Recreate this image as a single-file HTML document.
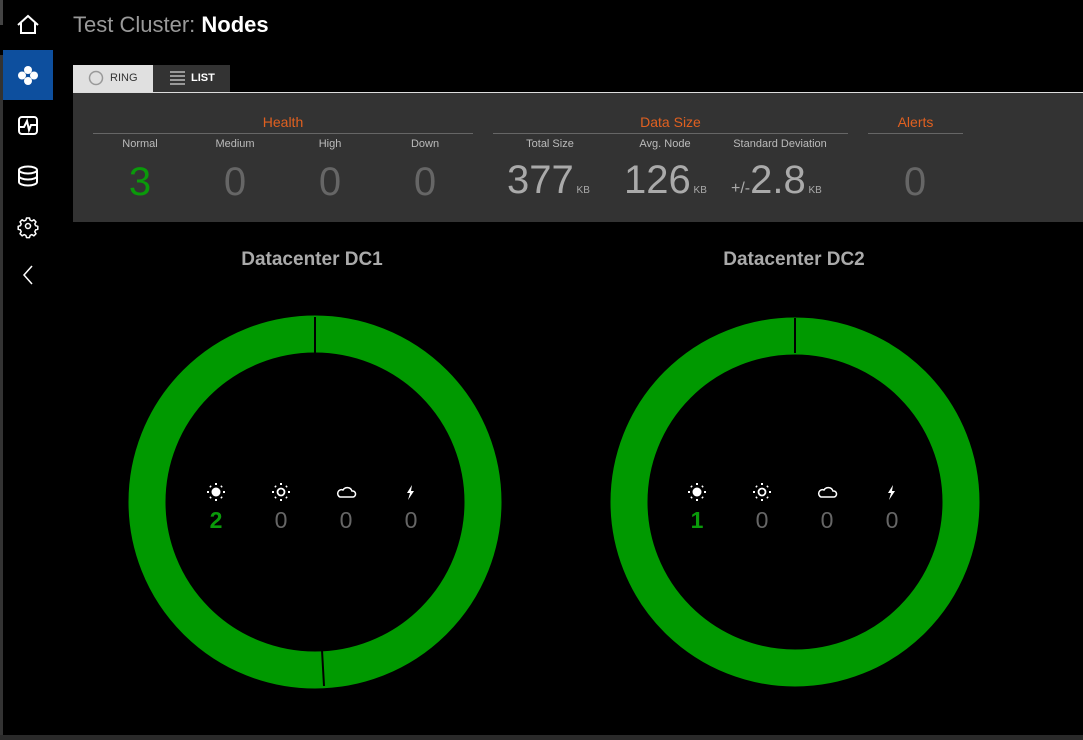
<!DOCTYPE html>
<html><head><style>
body{margin:0;width:1083px;height:740px;background:#000;font-family:"Liberation Sans",Arial,sans-serif;position:relative;overflow:hidden}
.a{position:absolute}
.lab{font-size:11px;color:#bbb;text-align:center;width:100px}
.big{font-size:40px;color:#666;text-align:center;width:100px}
.sec{font-size:14px;color:#e06020;text-align:center}
.kb{font-size:10px;color:#aaa}
.cnt{font-size:23px;color:#666;width:40px;text-align:center}
</style></head><body>
<div class="a" style="left:0;top:0;width:3px;height:25px;background:#444"></div>
<div class="a" style="left:0;top:55px;width:3px;height:680px;background:#333"></div>
<div class="a" style="left:3px;top:50px;width:50px;height:50px;background:#0d4f9e"></div>
<svg class="a" style="left:0;top:0" width="53" height="300" fill="none" stroke="#fff" stroke-width="2">
<path d="M18 25 L28 16 L38 25 M21 23 V33 H35 V23"/>
<g fill="#fff" stroke="none"><circle cx="28" cy="70" r="4"/><circle cx="28" cy="81" r="4"/><circle cx="22" cy="75.5" r="4"/><circle cx="34" cy="75.5" r="4"/></g>
<rect x="19" y="117" width="18" height="17" rx="3"/><path d="M19 127 H24 L27 121 L29 130 L31 125 H37"/>
<ellipse cx="28" cy="170" rx="9" ry="3.5"/><path d="M19 170 V182 M37 170 V182 M19 176 A9 3.5 0 0 0 37 176 M19 182 A9 3.5 0 0 0 37 182"/>
<circle cx="28" cy="226" r="2.5" stroke-width="1.5"/>
<path stroke-width="1.5" stroke-linejoin="round" d="M26.5 218 h3 l0.6 2.2 l1.8 0.8 l2-1.2 l2.1 2.1 l-1.2 2 l0.8 1.8 l2.2 0.6 v3 l-2.2 0.6 l-0.8 1.8 l1.2 2 l-2.1 2.1 l-2-1.2 l-1.8 0.8 l-0.6 2.2 h-3 l-0.6-2.2 l-1.8-0.8 l-2 1.2 l-2.1-2.1 l1.2-2 l-0.8-1.8 l-2.2-0.6 v-3 l2.2-0.6 l0.8-1.8 l-1.2-2 l2.1-2.1 l2 1.2 l1.8-0.8 z"/>
<path d="M32 266 L24 275 L32 284" stroke-width="1.5"/>
</svg>
<div class="a" style="left:73px;top:12px;font-size:22px;color:#999">Test Cluster: <span style="color:#fff;font-weight:bold">Nodes</span></div>
<div class="a" style="left:73px;top:65px;width:80px;height:27px;background:#e0e0e0"></div>
<svg class="a" style="left:88px;top:70px" width="16" height="16"><circle cx="8" cy="8" r="6.5" fill="none" stroke="#999" stroke-width="1.5"/></svg>
<div class="a" style="left:110px;top:72px;font-size:11px;color:#333">RING</div>
<div class="a" style="left:153px;top:65px;width:77px;height:27px;background:#333"></div>
<svg class="a" style="left:170px;top:71px" width="16" height="14" stroke="#bbb" stroke-width="1.5"><path d="M0 1H15M0 5H15M0 9H15M0 13H15"/></svg>
<div class="a" style="left:191px;top:72px;font-size:11px;color:#fff;font-weight:bold">LIST</div>
<div class="a" style="left:73px;top:92px;width:1010px;height:130px;background:#333;border-top:1px solid #ddd;box-sizing:border-box"></div>
<div class="a sec" style="left:93px;top:114px;width:380px">Health</div>
<div class="a" style="left:93px;top:133px;width:380px;height:1px;background:#666"></div>
<div class="a sec" style="left:493px;top:114px;width:355px">Data Size</div>
<div class="a" style="left:493px;top:133px;width:355px;height:1px;background:#666"></div>
<div class="a sec" style="left:868px;top:114px;width:95px">Alerts</div>
<div class="a" style="left:868px;top:133px;width:95px;height:1px;background:#666"></div>
<div class="a lab" style="left:90px;top:138px">Normal</div><div class="a big" style="left:90px;top:160px;color:#0a9a0a">3</div>
<div class="a lab" style="left:185px;top:138px">Medium</div><div class="a big" style="left:185px;top:160px">0</div>
<div class="a lab" style="left:280px;top:138px">High</div><div class="a big" style="left:280px;top:160px">0</div>
<div class="a lab" style="left:375px;top:138px">Down</div><div class="a big" style="left:375px;top:160px">0</div>
<div class="a lab" style="left:500px;top:138px">Total Size</div>
<div class="a lab" style="left:615px;top:138px">Avg. Node</div>
<div class="a lab" style="left:730px;top:138px">Standard Deviation</div>
<div class="a" style="left:507px;top:158px;font-size:40px;color:#aaa">377<span class="kb"> KB</span></div>
<div class="a" style="left:624px;top:158px;font-size:40px;color:#aaa">126<span class="kb"> KB</span></div>
<div class="a" style="left:731px;top:158px;font-size:40px;color:#aaa"><span style="font-size:16px">+/-</span>2.8<span class="kb"> KB</span></div>
<div class="a big" style="left:865px;top:160px">0</div>
<div class="a" style="left:112px;top:249px;width:400px;text-align:center;font-size:19px;font-weight:bold;color:#aaa">Datacenter DC1</div>
<div class="a" style="left:594px;top:249px;width:400px;text-align:center;font-size:19px;font-weight:bold;color:#aaa">Datacenter DC2</div>
<svg class="a" style="left:0;top:0" width="1083" height="740">
<circle cx="315" cy="502" r="168" fill="none" stroke="#009900" stroke-width="37"/>
<path d="M315 317 V353 M322 650 L324 686" stroke="#000" stroke-width="2"/>
<circle cx="795" cy="502" r="166" fill="none" stroke="#009900" stroke-width="37"/>
<path d="M795 318 V353" stroke="#000" stroke-width="2"/>
<g id="ic" fill="#fff" stroke="#fff">
<circle cx="216" cy="492" r="4.5" stroke="none"/>
<circle cx="281" cy="492" r="3.5" fill="none" stroke-width="1.8"/>
<path d="M340 497 H353 A3 3 0 0 0 352 491 A5 5 0 0 0 343 490 A3.5 3.5 0 0 0 340 497Z" fill="none" stroke-width="1.5"/>
<path d="M412 485 L407 493 H410 L408 500 L414 491 H411 Z" stroke="none"/>
<g stroke-width="2"><path d="M216 483v2M216 499v2M207 492h2M223 492h2M210 486l1 1M221 497l1 1M210 498l1 -1M221 487l1 -1M281 483v2M281 499v2M272 492h2M288 492h2M275 486l1 1M286 497l1 1M275 498l1 -1M286 487l1 -1"/></g>
</g>
<use href="#ic" x="481"/>
</svg>
<div class="a cnt" style="left:196px;top:507px;color:#0a9a0a;font-weight:bold">2</div>
<div class="a cnt" style="left:261px;top:507px">0</div>
<div class="a cnt" style="left:326px;top:507px">0</div>
<div class="a cnt" style="left:391px;top:507px">0</div>
<div class="a cnt" style="left:677px;top:507px;color:#0a9a0a;font-weight:bold">1</div>
<div class="a cnt" style="left:742px;top:507px">0</div>
<div class="a cnt" style="left:807px;top:507px">0</div>
<div class="a cnt" style="left:872px;top:507px">0</div>
<div class="a" style="left:0;top:735px;width:1083px;height:5px;background:#2a2a2a"></div>
</body></html>
